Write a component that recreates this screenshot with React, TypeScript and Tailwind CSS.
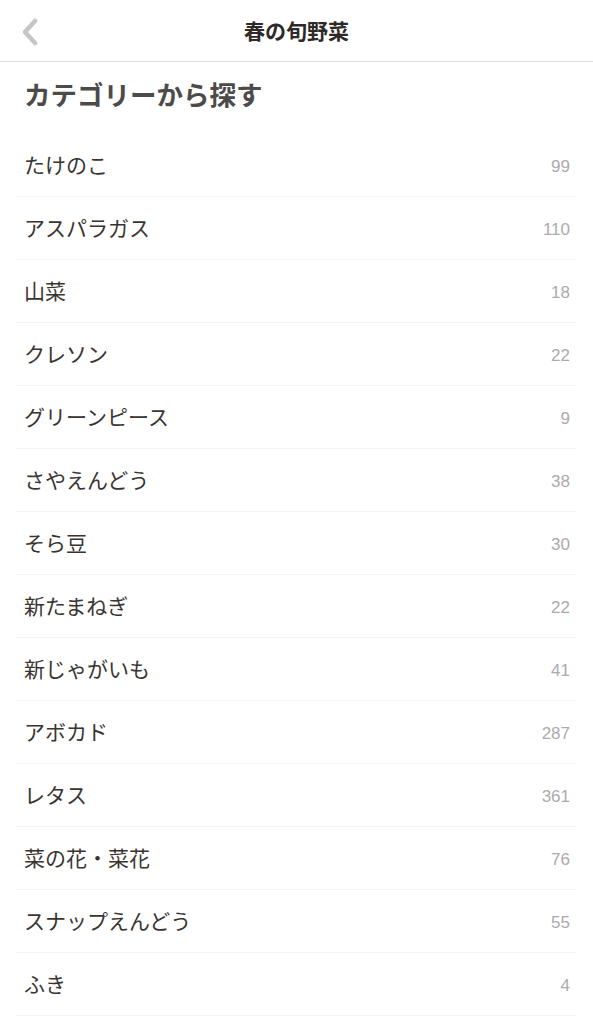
const categories = [
  { name: "たけのこ", count: 99 },
  { name: "アスパラガス", count: 110 },
  { name: "山菜", count: 18 },
  { name: "クレソン", count: 22 },
  { name: "グリーンピース", count: 9 },
  { name: "さやえんどう", count: 38 },
  { name: "そら豆", count: 30 },
  { name: "新たまねぎ", count: 22 },
  { name: "新じゃがいも", count: 41 },
  { name: "アボカド", count: 287 },
  { name: "レタス", count: 361 },
  { name: "菜の花・菜花", count: 76 },
  { name: "スナップえんどう", count: 55 },
  { name: "ふき", count: 4 },
]

const font = "font-['Noto_Sans_CJK_JP','Noto_Sans',sans-serif]"

export default function App() {
  return (
    <div className={`min-h-screen bg-white ${font}`}>
      {/* header */}
      <div className="relative flex h-[62px] items-center justify-center border-b border-[#dcdcdc]">
        <button className="absolute left-[16px] top-[16px]">
          <svg width="24" height="32" viewBox="0 0 24 32" fill="none">
            <path d="M19 5 L9 16 L19 27" stroke="#c6c6c6" strokeWidth="4.5" strokeLinecap="round" strokeLinejoin="round" />
          </svg>
        </button>
        <h1 className="text-[21px] font-bold text-[#2f2a28]">春の旬野菜</h1>
      </div>

      <div className="px-4">
        <h2 className="flex h-[72px] items-center px-2 pb-[8px] text-[26.5px] font-bold text-[#4d4a4a]">カテゴリーから探す</h2>
        <ul>
          {categories.map((c) => (
            <li key={c.name} className="flex h-[63px] items-center justify-between border-b border-[#f3f3f3] pl-2 pr-[7px]">
              <span className="text-[21px] text-[#3a3431]">{c.name}</span>
              <span className="pt-[4px] font-['Liberation_Sans',sans-serif] text-[17px] text-[#ababab]">{c.count}</span>
            </li>
          ))}
        </ul>
      </div>
    </div>
  )
}
